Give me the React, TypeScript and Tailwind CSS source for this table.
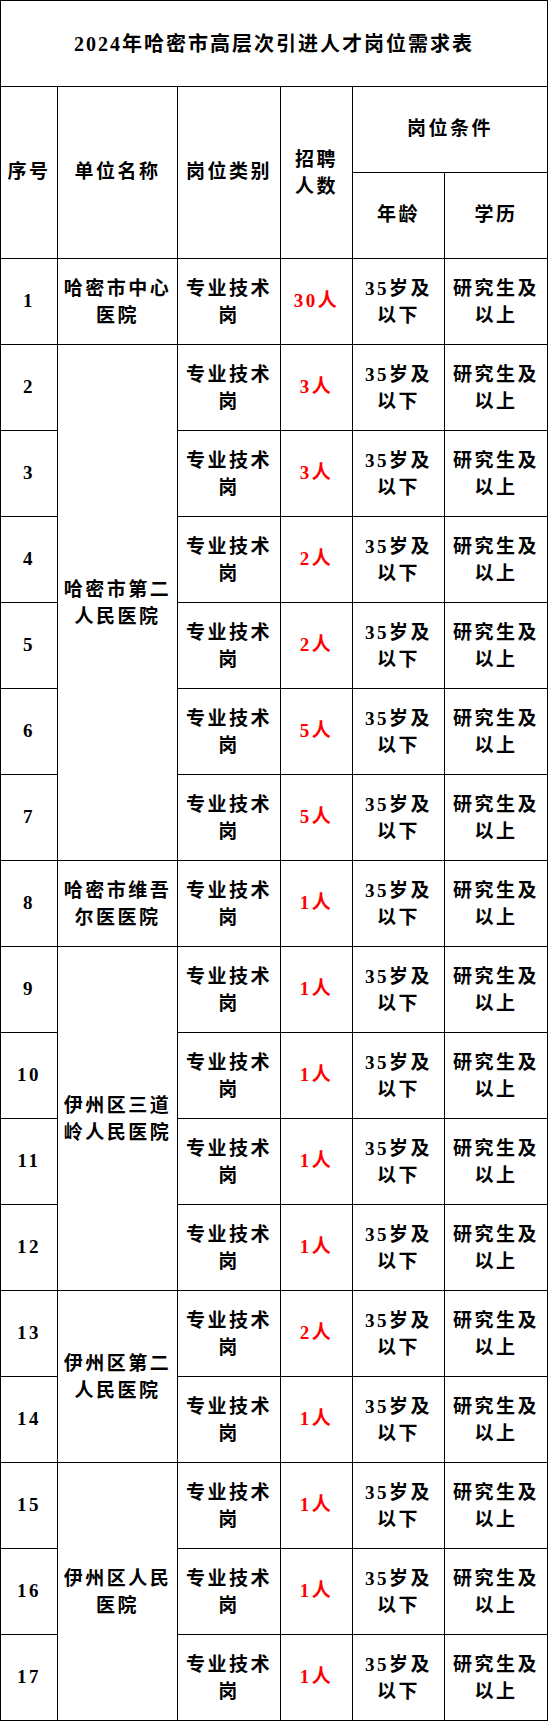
import React from "react";

const FONT = '"Liberation Serif", "Noto Sans CJK SC", serif';

type Row = { n: number; unit?: [string, string]; span?: number; count: string };

const rows: Row[] = [
  { n: 1, unit: ["哈密市中心", "医院"], span: 1, count: "30人" },
  { n: 2, unit: ["哈密市第二", "人民医院"], span: 6, count: "3人" },
  { n: 3, count: "3人" },
  { n: 4, count: "2人" },
  { n: 5, count: "2人" },
  { n: 6, count: "5人" },
  { n: 7, count: "5人" },
  { n: 8, unit: ["哈密市维吾", "尔医医院"], span: 1, count: "1人" },
  { n: 9, unit: ["伊州区三道", "岭人民医院"], span: 4, count: "1人" },
  { n: 10, count: "1人" },
  { n: 11, count: "1人" },
  { n: 12, count: "1人" },
  { n: 13, unit: ["伊州区第二", "人民医院"], span: 2, count: "2人" },
  { n: 14, count: "1人" },
  { n: 15, unit: ["伊州区人民", "医院"], span: 3, count: "1人" },
  { n: 16, count: "1人" },
  { n: 17, count: "1人" },
];

const cell = "border border-black text-center align-middle p-0";

function Two({ a, b }: { a: string; b: string }) {
  return (
    <div className="flex flex-col items-center leading-[27px]">
      <span>{a}</span>
      <span>{b}</span>
    </div>
  );
}

export default function App() {
  return (
    <div className="w-[548px] bg-white" style={{ fontFamily: FONT }}>
      <table className="w-[548px] table-fixed border-collapse text-[19px] font-bold tracking-[2.5px] text-black">
        <colgroup>
          <col className="w-[57px]" />
          <col className="w-[120px]" />
          <col className="w-[103px]" />
          <col className="w-[72px]" />
          <col className="w-[92px]" />
          <col className="w-[103px]" />
        </colgroup>
        <tbody>
          <tr className="h-[86px]">
            <td colSpan={6} className={`${cell} text-[20px] tracking-[2px]`}>
              2024年哈密市高层次引进人才岗位需求表
            </td>
          </tr>
          <tr className="h-[86px]">
            <td rowSpan={2} className={cell}>序号</td>
            <td rowSpan={2} className={cell}>单位名称</td>
            <td rowSpan={2} className={cell}>岗位类别</td>
            <td rowSpan={2} className={cell}>
              <Two a="招聘" b="人数" />
            </td>
            <td colSpan={2} className={cell}>岗位条件</td>
          </tr>
          <tr className="h-[86px]">
            <td className={cell}>年龄</td>
            <td className={cell}>学历</td>
          </tr>
          {rows.map((r) => (
            <tr key={r.n} className="h-[86px]">
              <td className={cell}>{r.n}</td>
              {r.unit && (
                <td rowSpan={r.span} className={cell}>
                  <Two a={r.unit[0]} b={r.unit[1]} />
                </td>
              )}
              <td className={cell}>
                <Two a="专业技术" b="岗" />
              </td>
              <td className={`${cell} text-[#ff0000]`}>{r.count}</td>
              <td className={cell}>
                <Two a="35岁及" b="以下" />
              </td>
              <td className={cell}>
                <Two a="研究生及" b="以上" />
              </td>
            </tr>
          ))}
        </tbody>
      </table>
    </div>
  );
}
